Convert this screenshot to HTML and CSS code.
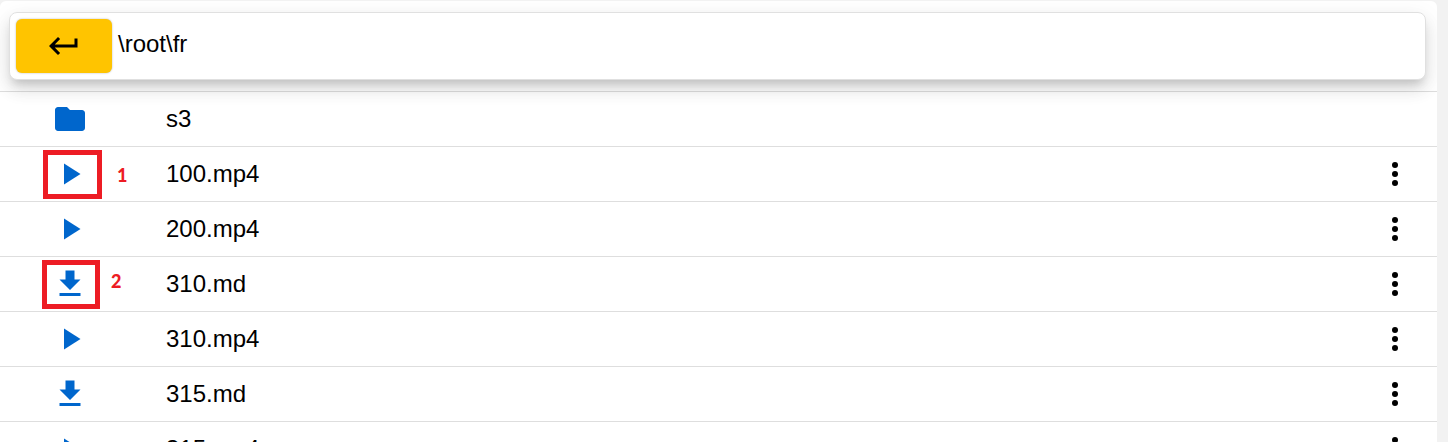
FILE: index.html
```html
<!DOCTYPE html>
<html lang="en">
<head>
  <meta charset="UTF-8">
  <meta name="viewport" content="width=device-width, initial-scale=1.0">
  <title>File Browser</title>
  <link rel="stylesheet" href="styles.css">
</head>
<body>
  <!-- Shared icons -->
  <svg class="sprite" aria-hidden="true">
    <symbol id="icon-return" viewBox="0 0 24 24"><path d="M19 7v4H5.83l3.58-3.59L8 6l-6 6 6 6 1.41-1.41L5.83 13H21V7z"/></symbol>
    <symbol id="icon-folder" viewBox="0 0 24 24"><path d="M10 4H4c-1.1 0-1.99.9-1.99 2L2 18c0 1.100.9 2 2 2h16c1.100 0 2-.9 2-2V8c0-1.100-.9-2-2-2h-8l-2-2z"/></symbol>
    <symbol id="icon-play" viewBox="0 0 24 24"><path d="M8 5v14l11-7z"/></symbol>
    <symbol id="icon-download" viewBox="0 0 24 24"><path d="M19 9h-4V3H9v6H5l7 7 7-7zM5 18v2h14v-2H5z"/></symbol>
    <symbol id="icon-more" viewBox="0 0 24 24"><circle cx="12" cy="6" r="2"/><circle cx="12" cy="12" r="2"/><circle cx="12" cy="18" r="2"/></symbol>
  </svg>

  <main class="browser">
    <header class="header">
      <nav class="path-bar">
        <button class="back" type="button" aria-label="Back"><svg class="back-icon"><use href="#icon-return"/></svg></button>
        <span class="path">\root\fr</span>
      </nav>
    </header>

    <ul class="files">
      <li class="file">
        <button class="action" type="button" aria-label="Open s3"><svg class="icon"><use href="#icon-folder"/></svg></button>
        <span class="name">s3</span>
      </li>
      <li class="file">
        <button class="action" type="button" aria-label="Play 100.mp4"><svg class="icon"><use href="#icon-play"/></svg></button>
        <span class="name">100.mp4</span>
        <button class="more" type="button" aria-label="More for 100.mp4"><svg class="icon"><use href="#icon-more"/></svg></button>
        <span class="mark mark-play"></span>
        <span class="mark-label label-play">1</span>
      </li>
      <li class="file">
        <button class="action" type="button" aria-label="Play 200.mp4"><svg class="icon"><use href="#icon-play"/></svg></button>
        <span class="name">200.mp4</span>
        <button class="more" type="button" aria-label="More for 200.mp4"><svg class="icon"><use href="#icon-more"/></svg></button>
      </li>
      <li class="file">
        <button class="action" type="button" aria-label="Download 310.md"><svg class="icon"><use href="#icon-download"/></svg></button>
        <span class="name">310.md</span>
        <button class="more" type="button" aria-label="More for 310.md"><svg class="icon"><use href="#icon-more"/></svg></button>
        <span class="mark mark-download"></span>
        <span class="mark-label label-download">2</span>
      </li>
      <li class="file">
        <button class="action" type="button" aria-label="Play 310.mp4"><svg class="icon"><use href="#icon-play"/></svg></button>
        <span class="name">310.mp4</span>
        <button class="more" type="button" aria-label="More for 310.mp4"><svg class="icon"><use href="#icon-more"/></svg></button>
      </li>
      <li class="file">
        <button class="action" type="button" aria-label="Download 315.md"><svg class="icon"><use href="#icon-download"/></svg></button>
        <span class="name">315.md</span>
        <button class="more" type="button" aria-label="More for 315.md"><svg class="icon"><use href="#icon-more"/></svg></button>
      </li>
      <li class="file">
        <button class="action" type="button" aria-label="Play 315.mp4"><svg class="icon"><use href="#icon-play"/></svg></button>
        <span class="name">315.mp4</span>
        <button class="more" type="button" aria-label="More for 315.mp4"><svg class="icon"><use href="#icon-more"/></svg></button>
      </li>
    </ul>
  </main>
</body>
</html>
```
FILE: styles.css
```css
* {
  box-sizing: border-box;
}

html {
  scrollbar-width: none;
}

body {
  margin: 0;
  padding: 1px 11px 0 0;
  background-color: #f2f2f2;
  color: #000;
  font-family: Arial, "Liberation Sans", sans-serif;
  font-size: 24px;
  line-height: 28px;
}

button {
  padding: 0;
  border: none;
  background: none;
  color: inherit;
  cursor: pointer;
}

svg {
  display: block;
  fill: currentColor;
}

.sprite {
  position: absolute;
  width: 0;
  height: 0;
}

.browser {
  background-color: #fff;
  border-radius: 6px;
  overflow: hidden;
}

.header {
  padding: 11px 11px 11px 9px;
  border-bottom: 1px solid #dedede;
}

.path-bar {
  display: flex;
  align-items: flex-start;
  gap: 6px;
  padding: 6px;
  border: 1px solid #e0e0e0;
  border-radius: 8px;
  background-color: #fff;
  box-shadow: 0 7px 8px -4px rgba(0, 0, 0, 0.14), 0 10px 17px 0 rgba(0, 0, 0, 0.1), 0 5px 22px 2px rgba(0, 0, 0, 0.06);
}

.back {
  display: flex;
  align-items: center;
  justify-content: center;
  width: 96px;
  height: 54px;
  border-radius: 6px;
  background-color: #ffc400;
  box-shadow: 0 0 2px rgba(0, 0, 0, 0.3);
}

.back-icon {
  width: 36px;
  height: 36px;
}

.path {
  padding-top: 11px;
}

.files {
  margin: 0;
  padding: 0;
  list-style: none;
}

.file {
  position: relative;
  display: flex;
  align-items: center;
  height: 55px;
  padding: 0 24px 0 52px;
  border-bottom: 1px solid #dedede;
}

.icon {
  width: 36px;
  height: 36px;
}

.action {
  margin-right: 78px;
  color: #0066cc;
}

.name {
  flex: 1;
}

/* Numbered highlights over the action icons */
.mark {
  position: absolute;
  top: 3px;
  height: 49px;
  border: 5px solid #ed1c24;
  pointer-events: none;
}

.mark-play {
  left: 43px;
  width: 59px;
}

.mark-download {
  left: 42px;
  width: 58px;
}

.mark-label {
  position: absolute;
  top: 14px;
  color: #ed1c24;
  font-family: Lato, sans-serif;
  font-size: 18px;
  font-weight: 900;
}

.label-play {
  left: 117px;
}

.label-download {
  top: 10px;
  left: 111px;
}
```
